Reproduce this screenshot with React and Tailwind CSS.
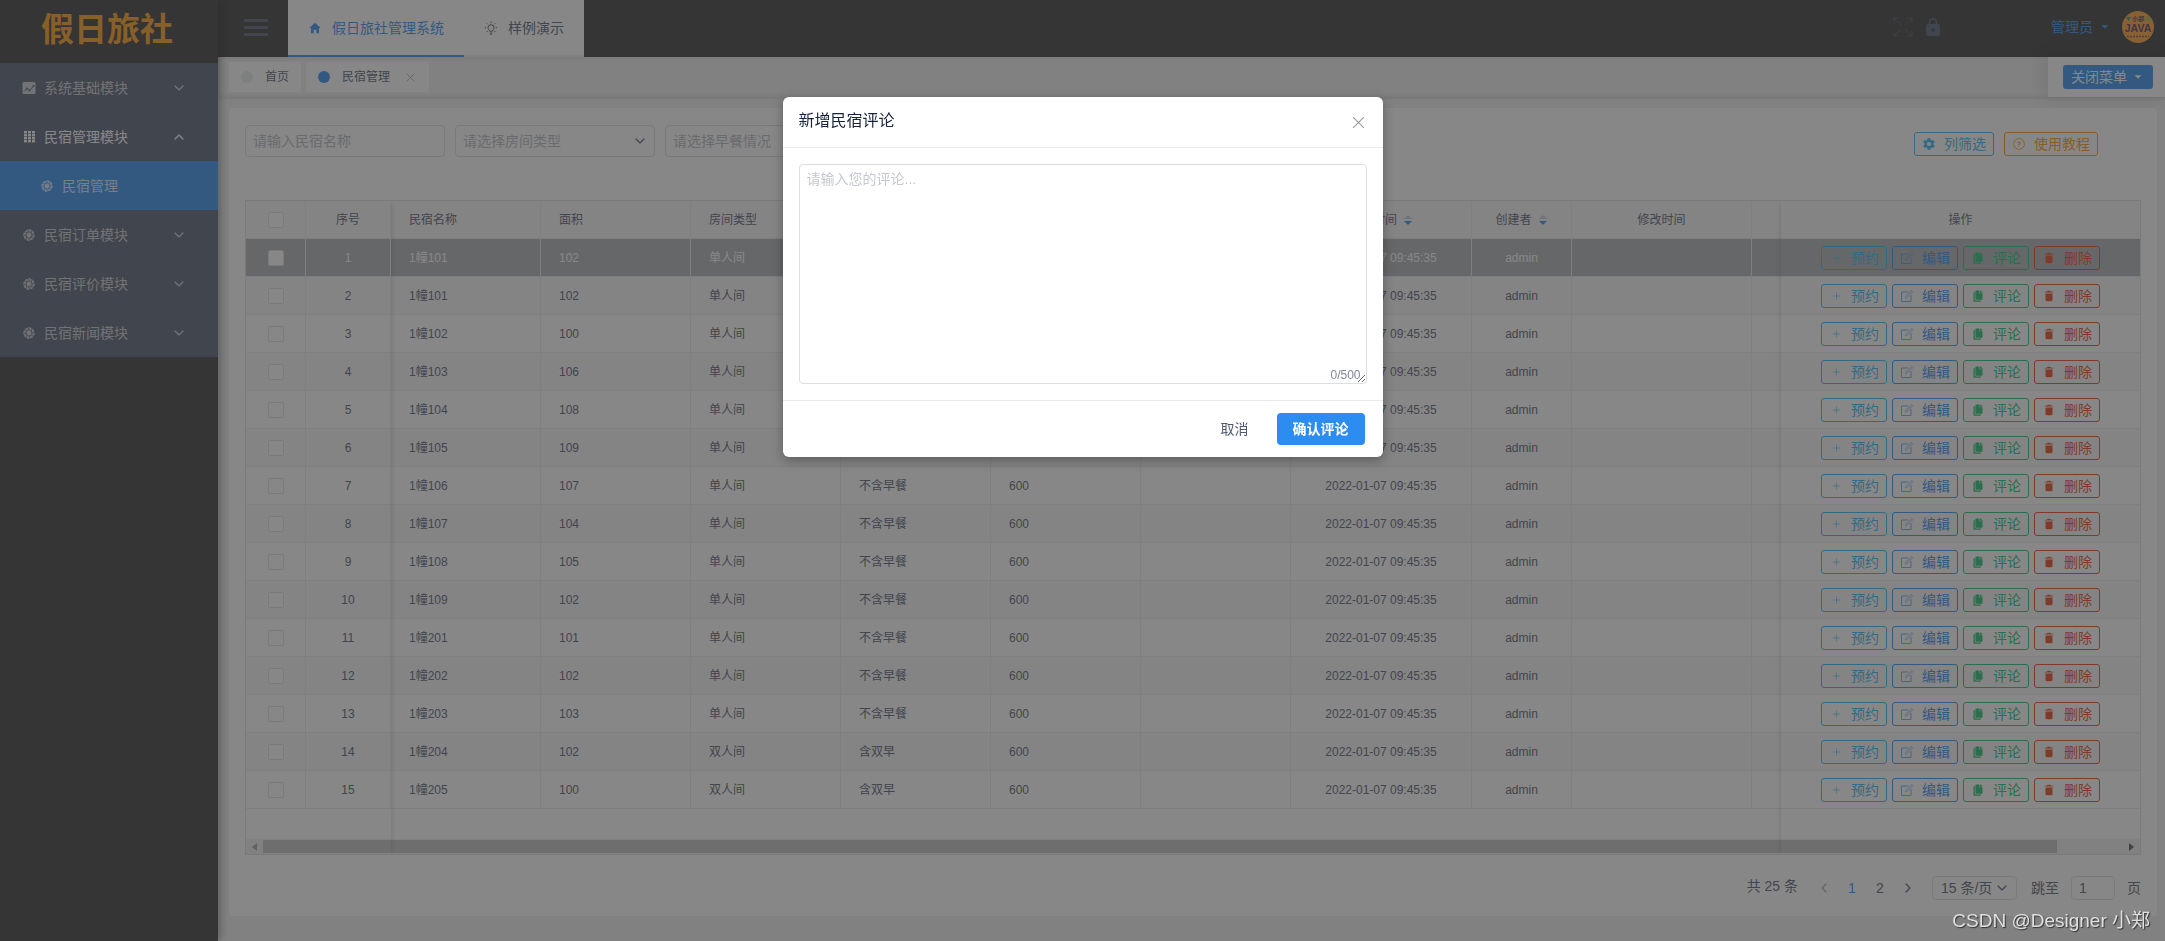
import React, { useState } from 'react';
import clsx from 'clsx';
import {
  IoIosAperture,
  IoIosArrowBack,
  IoIosArrowDown,
  IoIosArrowForward,
  IoIosArrowUp,
  IoIosCopy,
  IoIosHelpCircleOutline,
  IoMdArrowDropdown,
  IoMdHome,
  IoMdLock,
  IoMdSettings,
  IoMdTrash,
} from 'react-icons/io';

const AnalyticsIcon = ({ size = 14 }) => (
  <svg width={size} height={size} viewBox="0 0 14 14">
    <rect x="0.500" y="1" width="13" height="12" rx="1.500" fill="currentColor" />
    <path d="M2 10.500l3-3 2.500 2L12 4.500" fill="none" stroke="#515a6e" strokeWidth="1" />
    <g fill="#515a6e">
      <circle cx="5" cy="7.500" r="1.100" />
      <circle cx="7.500" cy="9.500" r="1.100" />
      <circle cx="11.500" cy="5" r="1.100" />
    </g>
  </svg>
);

const GridIcon = ({ size = 14 }) => (
  <svg width={size} height={size} viewBox="0 0 14 14" fill="currentColor">
    {[1, 4, 7, 10].map((y) =>
      [2, 6, 10].map((x) => <rect key={`${x}-${y}`} x={x} y={y} width="3" height="2.4" />)
    )}
  </svg>
);

const BulbIcon = () => (
  <svg width="14" height="14" viewBox="0 0 14 14" fill="none" stroke="currentColor" strokeWidth="1">
    <path d="M5.5 10.2C5.4 8.9 4 8.5 4 6.7a3 3 0 0 1 6 0c0 1.800-1.400 2.200-1.500 3.500zM5.700 12h2.600M6.200 13.400h1.600" />
    <path d="M7 .6v1.600M2.600 2.300l1 1M11.400 2.300l-1 1M.8 6.700h1.400M11.800 6.700h1.400M2.600 11l1-1M11.400 11l-1-1" />
  </svg>
);

const ExpandIcon = () => (
  <svg width="20" height="20" viewBox="0 0 20 20" fill="none" stroke="currentColor" strokeWidth="1">
    <path d="M1 6V1h5M1 1l7 7M14 1h5v5M19 1l-7 7M1 14v5h5M1 19l7-7M14 19h5v-5M19 19l-7-7" />
  </svg>
);

const AddIcon = () => (
  <svg width="14" height="14" viewBox="0 0 14 14" fill="none" stroke="currentColor" opacity="0.6">
    <path d="M7.500 3.500v7M4 7h7" />
  </svg>
);

const EditIcon = () => (
  <svg width="14" height="14" viewBox="0 0 14 14" fill="none" stroke="currentColor" opacity="0.7">
    <path d="M8.500 3H1.500v9.500h9.500V6" />
    <path d="M5.500 8.800l.3-1.500L12 1.500l1 1L7 8.500z" strokeWidth="0.700" />
  </svg>
);

const CopyIcon = () => <IoIosCopy size={12} className="mx-px" />;

const CrossIcon = ({ size }) => (
  <svg width={size} height={size} viewBox="0 0 12 12" fill="none" stroke="currentColor">
    <path d="M1 1l10 10M11 1L1 11" />
  </svg>
);

const menus = [
  { title: '系统基础模块', icon: AnalyticsIcon },
  { title: '民宿管理模块', icon: GridIcon, open: true, children: ['民宿管理'] },
  { title: '民宿订单模块', icon: IoIosAperture },
  { title: '民宿评价模块', icon: IoIosAperture },
  { title: '民宿新闻模块', icon: IoIosAperture },
];

const rows = [
  ['1幢101', 102, '单人间', '不含早餐'],
  ['1幢101', 102, '单人间', '不含早餐'],
  ['1幢102', 100, '单人间', '不含早餐'],
  ['1幢103', 106, '单人间', '不含早餐'],
  ['1幢104', 108, '单人间', '不含早餐'],
  ['1幢105', 109, '单人间', '不含早餐'],
  ['1幢106', 107, '单人间', '不含早餐'],
  ['1幢107', 104, '单人间', '不含早餐'],
  ['1幢108', 105, '单人间', '不含早餐'],
  ['1幢109', 102, '单人间', '不含早餐'],
  ['1幢201', 101, '单人间', '不含早餐'],
  ['1幢202', 102, '单人间', '不含早餐'],
  ['1幢203', 103, '单人间', '不含早餐'],
  ['1幢204', 102, '双人间', '含双早'],
  ['1幢205', 100, '双人间', '含双早'],
];

const actions = [
  { label: '预约', icon: AddIcon, color: 'border-[#2db7f5] text-[#2db7f5]' },
  { label: '编辑', icon: EditIcon, color: 'border-[#2d8cf0] text-[#2d8cf0]' },
  { label: '评论', icon: CopyIcon, color: 'border-[#19be6b] text-[#19be6b]' },
  { label: '删除', icon: IoMdTrash, color: 'border-[#ed4014] text-[#ed4014]' },
];

function GhostButton({ label, icon: Icon, color }) {
  return (
    <button className={clsx('flex h-6 items-center gap-2 rounded-[3px] border px-[7px] text-sm leading-5', color)}>
      <Icon size={14} />
      <span>{label}</span>
    </button>
  );
}

function Sidebar() {
  return (
    <aside className="relative z-10 w-[218px] shrink-0 bg-[#323232] shadow-[2px_0_8px_rgba(0,0,0,0.4)]">
      <div className="flex h-[63px] items-center justify-center pb-1 pr-1">
        <span className="text-[33px] font-bold leading-10 text-[#ff9c14]">假日旅社</span>
      </div>
      <nav className="bg-[#515a6e] text-sm">
        {menus.map(({ title, icon: Icon, open, children }) => (
          <div key={title}>
            <button
              className={clsx(
                'flex h-[49px] w-full items-center gap-2 pl-[22px] pr-8 text-left',
                open ? 'text-white' : 'text-white/70'
              )}
            >
              <Icon size={14} />
              <span className="flex-1">{title}</span>
              {open ? <IoIosArrowUp size={14} /> : <IoIosArrowDown size={14} />}
            </button>
            {children?.map((child) => (
              <a key={child} href="#" className="flex h-[49px] items-center gap-2 bg-[#2d8cf0] pl-10 text-white/80">
                <IoIosAperture size={14} />
                {child}
              </a>
            ))}
          </div>
        ))}
      </nav>
    </aside>
  );
}

function Header() {
  return (
    <header className="flex h-[57px] bg-[#323232] text-sm">
      <button aria-label="收起菜单" className="flex w-[70px] flex-col justify-center gap-1 pb-[2px] pl-[26px]">
        <span className="h-[3px] w-6 bg-[#515a6e]" />
        <span className="h-[3px] w-6 bg-[#515a6e]" />
        <span className="h-[3px] w-6 bg-[#515a6e]" />
      </button>
      <nav className="flex bg-white">
        <a href="#" className="flex items-center gap-[10px] border-b-2 border-[#2d8cf0] px-5 text-[#2d8cf0]">
          <IoMdHome size={14} />
          假日旅社管理系统
        </a>
        <a href="#" className="flex items-center gap-[10px] border-b-2 border-[#f0f0f0] px-5 text-[#515a6e]">
          <BulbIcon />
          样例演示
        </a>
      </nav>
      <div className="ml-auto flex items-center pb-[3px] pr-[11px]">
        <button aria-label="全屏" className="mr-[9px] text-[#515a6e]/70">
          <ExpandIcon />
        </button>
        <button aria-label="锁屏" className="mr-[107px] text-[#515a6e]">
          <IoMdLock size={22} />
        </button>
        <button className="mr-[10px] flex items-center gap-[5px] text-[#2d8cf0]">
          管理员
          <IoMdArrowDropdown size={14} />
        </button>
        <svg width="32" height="32" viewBox="0 0 32 32" role="img" aria-label="头像">
          <circle cx="16" cy="16" r="16" fill="#ff9d2e" />
          <path d="M4 6l5 0-2.500 4z" fill="#1a9a72" />
          <circle cx="26" cy="8" r="2.500" fill="#9bbf3c" />
          <text x="16" y="10" fontSize="6" fontWeight="700" textAnchor="middle" fill="#4a3560">小郑</text>
          <text x="16" y="21" fontSize="10.500" fontWeight="700" textAnchor="middle" fill="#4a3560">JAVA</text>
          <path d="M5 25.500h22" stroke="#7a4a40" strokeWidth="1.500" strokeDasharray="2 1" />
        </svg>
      </div>
    </header>
  );
}

function TabsBar() {
  return (
    <div className="flex h-10 bg-[#f0f0f0] text-xs text-[#515a6e] shadow-[0_1px_3px_rgba(0,0,0,0.15),inset_0_0_3px_2px_rgba(100,100,100,0.1)]">
      <div className="flex flex-1 gap-[5px] pl-[11px] pt-[5px]">
        <a href="#" className="flex h-[30px] items-center gap-3 rounded-[3px] bg-white px-3">
          <span className="size-3 rounded-full bg-[#e8eaec]" />
          首页
        </a>
        <div className="flex h-[30px] items-center gap-3 rounded-[3px] bg-white pl-3 pr-[14px]">
          <span className="size-3 rounded-full bg-[#2d8cf0]" />
          民宿管理
          <button aria-label="关闭标签" className="ml-1 text-[#999999]">
            <CrossIcon size={9} />
          </button>
        </div>
      </div>
      <div className="flex w-[117px] items-center bg-white pl-[15px] shadow-[-3px_0_15px_3px_rgba(0,0,0,0.1)]">
        <button className="flex h-6 items-center gap-1 rounded-[3px] bg-[#2d8cf0] pl-2 pr-2 text-sm text-white">
          关闭菜单
          <IoMdArrowDropdown size={14} />
        </button>
      </div>
    </div>
  );
}

function FilterSelect({ label }) {
  return (
    <div className="relative w-[200px]">
      <select
        aria-label={label}
        className="h-8 w-full appearance-none rounded-[4px] border border-[#dcdee2] bg-white px-[7px] text-sm text-[#b4b8c0]"
      >
        <option>{label}</option>
      </select>
      <IoIosArrowDown size={14} className="pointer-events-none absolute right-2 top-[9px] text-[#515a6e]" />
    </div>
  );
}

function Filters() {
  return (
    <div className="flex items-start gap-[10px]">
      <input
        aria-label="民宿名称"
        placeholder="请输入民宿名称"
        className="h-8 w-[200px] rounded-[4px] border border-[#dcdee2] bg-white px-[7px] text-sm placeholder:text-[#b4b8c0]"
      />
      <FilterSelect label="请选择房间类型" />
      <FilterSelect label="请选择早餐情况" />
      <div className="ml-auto mr-[43px] mt-[7px] flex gap-[10px]">
        <GhostButton label="列筛选" icon={IoMdSettings} color="border-[#2db7f5] text-[#2db7f5]" />
        <GhostButton label="使用教程" icon={IoIosHelpCircleOutline} color="border-[#ff9900] text-[#ff9900]" />
      </div>
    </div>
  );
}

function SortTitle({ children }) {
  return (
    <button className="inline-flex items-center gap-[6px]">
      {children}
      <svg width="10" height="12" viewBox="0 0 10 12">
        <path d="M5 1l4 4H1z" fill="#c5c8ce" />
        <path d="M5 11l4-4H1z" fill="#2d8cf0" />
      </svg>
    </button>
  );
}

const cell = 'h-[38px] border-b border-r border-[#e8eaec] font-normal';
const left = 'px-[18px] text-left';

function DataTable() {
  return (
    <div className="relative mt-[43px] overflow-hidden border border-[#dcdee2]">
      <table className="w-full table-fixed border-separate border-spacing-0 text-center text-xs text-[#515a6e]">
        <colgroup>
          <col className="w-[60px]" />
          <col className="w-[85px]" />
          <col className="w-[150px]" />
          <col className="w-[150px]" />
          <col className="w-[150px]" />
          <col className="w-[150px]" />
          <col className="w-[150px]" />
          <col className="w-[150px]" />
          <col className="w-[181px]" />
          <col className="w-[100px]" />
          <col className="w-[180px]" />
          <col />
          <col className="w-[359px]" />
        </colgroup>
        <thead className="bg-[#f8f8f9]">
          <tr>
            <th className={cell}>
              <input
                type="checkbox"
                aria-label="全选"
                className="block mx-auto size-4 appearance-none rounded-[2px] border border-[#dcdee2] bg-white"
              />
            </th>
            <th className={cell}>序号</th>
            <th className={clsx(cell, left)}>民宿名称</th>
            <th className={clsx(cell, left)}>面积</th>
            <th className={clsx(cell, left)}>房间类型</th>
            <th className={clsx(cell, left)}>早餐情况</th>
            <th className={clsx(cell, left)}>价格</th>
            <th className={clsx(cell, left)}>备注</th>
            <th className={cell}>
              <SortTitle>创建时间</SortTitle>
            </th>
            <th className={cell}>
              <SortTitle>创建者</SortTitle>
            </th>
            <th className={cell}>修改时间</th>
            <th className="border-b border-[#e8eaec]" />
            <th className="border-b border-[#e8eaec] font-normal">操作</th>
          </tr>
        </thead>
        <tbody>
          {rows.map(([name, area, room, breakfast], i) => (
            <tr
              key={i}
              className={clsx(i === 0 ? 'bg-[#adb0b4] text-white' : i % 2 ? 'bg-[#f8f8f9]' : 'bg-white')}
            >
              <td className={cell}>
                <input
                  type="checkbox"
                  aria-label={`选择第 ${i + 1} 行`}
                  className="block mx-auto size-4 appearance-none rounded-[2px] border border-[#dcdee2] bg-white"
                />
              </td>
              <td className={cell}>{i + 1}</td>
              <td className={clsx(cell, left)}>{name}</td>
              <td className={clsx(cell, left)}>{area}</td>
              <td className={clsx(cell, left)}>{room}</td>
              <td className={clsx(cell, left)}>{breakfast}</td>
              <td className={clsx(cell, left)}>600</td>
              <td className={cell} />
              <td className={cell}>2022-01-07 09:45:35</td>
              <td className={cell}>admin</td>
              <td className={cell} />
              <td className="border-b border-[#e8eaec]" />
              <td className="border-b border-[#e8eaec]">
                <div className="flex justify-center gap-[5px]">
                  {actions.map((action) => (
                    <GhostButton key={action.label} {...action} />
                  ))}
                </div>
              </td>
            </tr>
          ))}
        </tbody>
      </table>
      <div className="mt-[30px] flex h-[15px] items-center bg-[#f1f1f1] px-[5px] text-[#505050]">
        <svg width="7" height="8" viewBox="0 0 7 8" fill="#a3a3a3">
          <path d="M6 0v8L1 4z" />
        </svg>
        <div className="ml-[5px] mr-[71px] h-[13px] flex-1 bg-[#c1c1c1]" />
        <svg width="7" height="8" viewBox="0 0 7 8" fill="currentColor">
          <path d="M1 0v8l5-4z" />
        </svg>
      </div>
      {/* shadows of the fixed columns */}
      <div className="pointer-events-none absolute inset-y-0 left-0 w-[145px] shadow-[2px_0_6px_-2px_rgba(0,0,0,0.2)]" />
      <div className="pointer-events-none absolute inset-y-0 right-0 w-[359px] shadow-[-2px_0_6px_-2px_rgba(0,0,0,0.2)]" />
    </div>
  );
}

function Pagination() {
  return (
    <div className="mt-[21px] flex h-6 items-center justify-end text-sm text-[#515a6e]">
      <span className="mr-3 pb-1">共 25 条</span>
      <button aria-label="上一页" className="flex w-7 justify-center text-[#a5a8ae]">
        <IoIosArrowBack size={14} />
      </button>
      <button className="w-7 text-[#2d8cf0]">1</button>
      <button className="w-7">2</button>
      <button aria-label="下一页" className="flex w-7 justify-center">
        <IoIosArrowForward size={14} />
      </button>
      <div className="relative ml-[10px] w-[85px]">
        <select
          aria-label="每页条数"
          className="block h-6 w-full appearance-none rounded-[4px] border border-[#dcdee2] bg-white pl-2 text-sm leading-5"
        >
          <option>15 条/页</option>
        </select>
        <IoIosArrowDown size={14} className="pointer-events-none absolute right-2 top-[5px]" />
      </div>
      <label htmlFor="page-jump" className="ml-[14px]">
        跳至
      </label>
      <input
        id="page-jump"
        defaultValue="1"
        className="mx-3 h-6 w-11 rounded-[4px] border border-[#dcdee2] bg-white px-[7px] text-sm"
      />
      <span>页</span>
    </div>
  );
}

function CommentModal() {
  const [comment, setComment] = useState('');

  return (
    <div className="fixed inset-0 z-50 flex items-start justify-center bg-[#373737]/60 pt-[97px]">
      <div
        role="dialog"
        aria-labelledby="modal-title"
        className="w-[600px] rounded-[6px] bg-white text-[#515a6e] shadow-[0_4px_12px_rgba(0,0,0,0.3)]"
      >
        <div className="flex h-[51px] items-center justify-between border-b border-[#e8eaec] px-4">
          <h2 id="modal-title" className="pb-[2px] text-base text-[#17233d]">
            新增民宿评论
          </h2>
          <button aria-label="关闭" className="mr-[2px] text-[#999999]">
            <CrossIcon size={13} />
          </button>
        </div>
        <div className="relative p-4">
          <textarea
            aria-label="评论"
            value={comment}
            maxLength={500}
            onChange={(e) => setComment(e.target.value)}
            placeholder="请输入您的评论..."
            className="block h-[220px] w-full rounded-[4px] border border-[#dcdee2] px-[7px] py-1 text-sm placeholder:text-[#c5c8ce]"
          />
          <span className="absolute bottom-[17px] right-[22px] text-xs leading-4 text-[#808695]">
            {`${comment.length}/500`}
          </span>
        </div>
        <div className="flex justify-end gap-3 border-t border-[#e8eaec] px-[18px] py-3 text-sm">
          <button className="h-8 px-4">取消</button>
          <button className="h-8 rounded-[4px] bg-[#2d8cf0] px-4 font-bold text-white">确认评论</button>
        </div>
      </div>
    </div>
  );
}

export default function App() {
  return (
    <div className="flex min-h-screen bg-[#f0f0f0] font-['Liberation_Sans','Noto_Sans_CJK_SC',sans-serif]">
      <Sidebar />
      <div className="min-w-0 flex-1">
        <Header />
        <TabsBar />
        <main className="pb-[25px] pl-[11px] pr-2 pt-[11px]">
          <section className="rounded-[4px] bg-white px-4 pb-4 pt-[17px]">
            <Filters />
            <DataTable />
            <Pagination />
          </section>
        </main>
      </div>
      <CommentModal />
      <div className="pointer-events-none fixed bottom-1 right-[15px] z-[60] text-[19px] leading-8 text-[#e0e0e0] [text-shadow:1px_1px_1px_#333]">
        CSDN @Designer 小郑
      </div>
    </div>
  );
}
